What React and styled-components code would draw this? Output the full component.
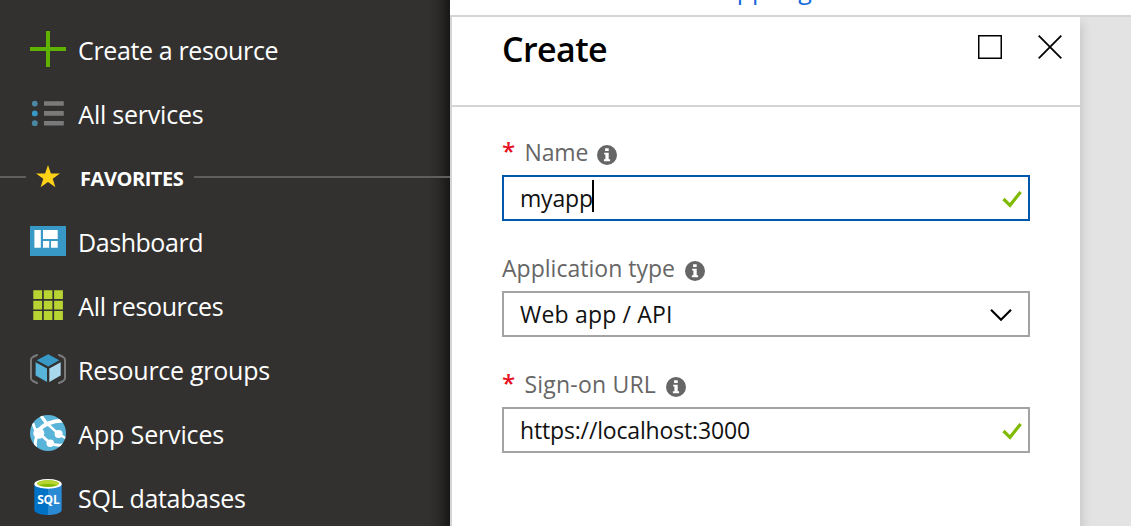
import React from 'react';
import styled, { createGlobalStyle } from 'styled-components';

const GlobalStyle = createGlobalStyle`
  * { box-sizing: border-box; }
  body {
    margin: 0;
    overflow: hidden;
    font-family: 'Open Sans', 'Noto Sans', sans-serif;
  }
`;

const Page = styled.div`
  display: flex;
  width: 1131px;
  height: 526px;
  overflow: hidden;
  background: #e3e3e3;
`;

const Sidebar = styled.nav`
  flex: none;
  width: 450px;
  height: 526px;
  padding-top: 17px;
  overflow: hidden;
  background: linear-gradient(to right, #323130 428px, #2b2a29 438px, #171716 450px);
`;

const NavItem = styled.a`
  display: flex;
  align-items: center;
  height: 64px;
  padding-left: 30px;
  color: #fff;
`;

const NavIcon = styled.svg`
  flex: none;
  width: 36px;
  height: 36px;
`;

const NavLabel = styled.span`
  margin: 1px 0 0 ${(p) => p.$gap}px;
  font-size: 25px;
  line-height: 34px;
  letter-spacing: ${(p) => p.$tracking}px;
  white-space: nowrap;
`;

const SectionHeader = styled.div`
  display: flex;
  align-items: center;
  height: 64px;
  color: #fff;
`;

const Rule = styled.span`
  flex: ${(p) => (p.$width ? 'none' : 1)};
  width: ${(p) => p.$width || 'auto'};
  height: 2px;
  margin-top: -1px;
  background: #5f5e5d;
`;

const SectionIcon = styled(NavIcon)`
  margin-left: 4px;
`;

const SectionLabel = styled.span`
  width: 114px;
  margin-top: 3px;
  margin-left: 14px;
  font-size: 20px;
  font-weight: 700;
  line-height: 28px;
  letter-spacing: -0.45px;
`;

const Content = styled.div`
  flex: 1;
  display: flex;
  flex-direction: column;
  min-width: 0;
`;

const TopBar = styled.header`
  flex: none;
  display: flex;
  align-items: flex-end;
  height: 17px;
  padding: 0 0 9px 271px;
  overflow: hidden;
  background: #fff;
  border-bottom: 2px solid #d5d5d5;
`;

const TopLink = styled.a`
  flex: none;
  color: #1468dc;
  font-size: 25px;
  line-height: 34px;
  white-space: nowrap;
`;

const Blade = styled.section`
  flex: 1;
  width: 630px;
  background: #fff;
  border-left: 2px solid #d5d5d5;
  box-shadow: 2px 6px 10px rgba(0, 0, 0, 0.14);
  clip-path: inset(0 -30px 0 0);
`;

const BladeHeader = styled.div`
  display: flex;
  align-items: flex-start;
  height: 90px;
  padding: 18px 18px 0 50px;
  border-bottom: 2px solid #d5d5d5;
`;

const BladeTitle = styled.h1`
  flex: 1;
  margin: -16px 0 0;
  color: #000;
  font-size: 34px;
  font-weight: 600;
  line-height: 60px;
  letter-spacing: -0.6px;
`;

const WindowButton = styled.button`
  width: 24px;
  height: 24px;
  margin-left: ${(p) => p.$gap || 0}px;
  padding: 0;
  background: none;
  border: 0;

  svg { display: block; }
`;

const Form = styled.form`
  display: flex;
  flex-direction: column;
  gap: 32px;
  padding: 30px 50px 0;
`;

const Field = styled.div`
  display: flex;
  flex-direction: column;
  gap: 8px;
`;

const FieldLabel = styled.label`
  display: flex;
  align-items: center;
  height: 30px;
  color: #666;
  font-size: 23px;
  line-height: 30px;
  letter-spacing: ${(p) => p.$tracking}px;
`;

const Required = styled.span`
  width: 22.5px;
  margin-top: -3px;
  color: #e81123;
  font-size: 24px;
  font-weight: 600;
`;

const InfoIcon = styled.svg`
  width: 20px;
  height: 20px;
  margin: 6px 0 0 ${(p) => p.$gap}px;
`;

const Control = styled.div`
  display: flex;
  align-items: center;
  height: 46px;
  padding: 0 6px 0 16px;
  background: #fff;
  border: 2px solid ${(p) => (p.$focused ? '#0058ad' : '#a3a3a3')};
`;

const Value = styled.span`
  color: #111;
  font-size: 23px;
  line-height: 32px;
  letter-spacing: ${(p) => p.$tracking}px;
  white-space: nowrap;
`;

const Caret = styled.span`
  width: 2px;
  height: 32px;
  margin: 0 0 4px -1px;
  background: #000;
`;

const StatusIcon = styled.svg`
  flex: none;
  width: 20px;
  height: 18px;
  margin: 2px 0 0 auto;
`;

const Chevron = styled.svg`
  flex: none;
  width: 22px;
  height: 14px;
  margin: 2px 10px 0 auto;
`;

const PlusGlyph = () => <path d="M16 0h4v16h16v4H20v16h-4V20H0v-4h16z" fill="#5db300" />;

const ListGlyph = () => (
  <>
    <circle cx="4.8" cy="8.6" r="2.9" fill="#4b88a3" />
    <circle cx="4.8" cy="18.4" r="2.9" fill="#3999c6" />
    <circle cx="4.8" cy="28.2" r="2.9" fill="#4b88a3" />
    <path d="M14 6.2h19.8v4.6H14zM14 16.1h19.8v4.6H14zM14 26h19.8v4.6H14z" fill="#7a7a7a" />
  </>
);

const DashboardGlyph = () => (
  <>
    <path d="M0 3h36v30H0z" fill="#3999c6" />
    <path d="M4.4 7h6.4v17.7H4.4zM13 7h14.7v9H13zM13 18h6.2v6.7H13zM21 18h6.7v6.7H21z" fill="#fff" />
  </>
);

const GridGlyph = () => (
  <path
    d="M3.3 3.3h8.8v8.8H3.300zM13.800 3.300h8.600v8.800h-8.600zM24.100 3.300h8.800v8.800h-8.800zM3.300 13.800h8.800v8.600H3.300zM13.800 13.800h8.600v8.600h-8.600zM24.100 13.800h8.800v8.600h-8.800zM3.300 24.100h8.800v8.800H3.300zM13.800 24.100h8.600v8.800h-8.600zM24.100 24.100h8.800v8.800h-8.800z"
    fill="#b8d432"
  />
);

const CubeGlyph = () => (
  <>
    <path
      d="M7 4 2.8 6Q1 7 1 9V27Q1 29 2.8 30L7 32M29 4l4.2 2Q35 7 35 9V27q0 2-1.8 3L29 32"
      fill="none"
      stroke="#7a7a7a"
      strokeWidth="2"
      strokeLinecap="round"
    />
    <path d="M6.7 9.2 18.2 3.3 29.300 9.200 18.200 15.500z" fill="#3999c6" />
    <path d="M5.600 11.200 17 17.600V31L5.600 24.500z" fill="#59b4d9" />
    <path d="M30.700 11.200 19.300 17.600V31L30.700 24.500z" fill="#a9d8ec" />
  </>
);

const GlobeGlyph = () => (
  <>
    <clipPath id="globe">
      <circle cx="18" cy="18" r="18" />
    </clipPath>
    <g clipPath="url(#globe)">
      <path d="M0 0h36v36H0z" fill="#59b4d9" />
      <g fill="none" stroke="#fff">
        <path d="M8 16Q16 6 33 5.500" strokeWidth="3.800" />
        <path d="M10.500 0 17 9" strokeWidth="3.200" />
        <path d="M17 8.500 28.500 19 37 24" strokeWidth="2.400" />
        <path d="M9 18 20.300 28.300Q25 31 33 30" strokeWidth="2.800" />
        <path d="M8 19Q4.500 25 5.500 33" strokeWidth="3" />
        <path d="M3 8Q4 14 8 18" strokeWidth="2.600" />
      </g>
      <circle cx="8.800" cy="18.300" r="5.500" fill="#fff" />
      <circle cx="28.600" cy="19" r="4" fill="#fff" />
      <circle cx="20.300" cy="28.200" r="3.800" fill="#fff" />
    </g>
  </>
);

const SqlText = styled.text`
  font: 700 12px 'Open Sans', sans-serif;
  letter-spacing: -0.2px;
  fill: #fff;
  text-anchor: middle;
`;

const DatabaseGlyph = () => (
  <>
    <path d="M4.300 5V31c0 2.700 6 5 13.700 5V5z" fill="#0072c6" />
    <path d="M18 5v31c7.700 0 13.700-2.300 13.700-5V5z" fill="#2a8ad4" />
    <ellipse cx="18" cy="4.900" rx="13.700" ry="4.900" fill="#fff" />
    <ellipse cx="18" cy="4.600" rx="11" ry="3.300" fill="#7fba00" />
    <path d="M7 4.600C7 2.700 12 1.300 18 1.300s11 1.400 11 3.300c0 .8-.8 1.400-2 1.900-2-.9-5.300-1.400-9-1.400s-7 .5-9 1.400C7.800 6 7 5.400 7 4.600z" fill="#b8d432" />
    <SqlText x="18.300" y="25.300">SQL</SqlText>
  </>
);

const actions = [
  { label: 'Create a resource', Glyph: PlusGlyph, gap: 12, tracking: -0.37 },
  { label: 'All services', Glyph: ListGlyph, gap: 12.3, tracking: -0.22 },
];

const favorites = [
  { label: 'Dashboard', Glyph: DashboardGlyph, gap: 12, tracking: -0.44 },
  { label: 'All resources', Glyph: GridGlyph, gap: 12.3, tracking: -0.35 },
  { label: 'Resource groups', Glyph: CubeGlyph, gap: 12, tracking: -0.27 },
  { label: 'App Services', Glyph: GlobeGlyph, gap: 12.3, tracking: -0.15 },
  { label: 'SQL databases', Glyph: DatabaseGlyph, gap: 12, tracking: -0.32 },
];

function NavList({ items }) {
  return items.map(({ label, Glyph, gap, tracking }) => (
    <NavItem key={label}>
      <NavIcon viewBox="0 0 36 36"><Glyph /></NavIcon>
      <NavLabel $gap={gap} $tracking={tracking}>{label}</NavLabel>
    </NavItem>
  ));
}

function Info({ gap }) {
  return (
    <InfoIcon viewBox="0 0 20 20" $gap={gap}>
      <circle cx="10" cy="10" r="10" fill="#666" />
      <path d="M8.1 3.300h3.600v2.600H8.100zM7.200 7.700h4.500v6.600h1.400v2H6.900v-2h1.500V9.600H7.200z" fill="#fff" />
    </InfoIcon>
  );
}

function Valid() {
  return (
    <StatusIcon viewBox="0 0 20 18">
      <path d="M1.500 9 8 15.300 18.600 2" fill="none" stroke="#7fba00" strokeWidth="3.200" />
    </StatusIcon>
  );
}

export default function App() {
  return (
    <>
      <GlobalStyle />
      <Page>
        <Sidebar>
          <NavList items={actions} />
          <SectionHeader>
            <Rule $width="26px" />
            <SectionIcon viewBox="0 0 36 36">
              <path d="M18 6l2.900 8.500H30l-7.300 5.300 2.700 8.500L18 23.100l-7.400 5.200 2.700-8.500L6 14.500h9.100z" fill="#fcd116" />
            </SectionIcon>
            <SectionLabel>FAVORITES</SectionLabel>
            <Rule />
          </SectionHeader>
          <NavList items={favorites} />
        </Sidebar>
        <Content>
          <TopBar>
            <TopLink>App registrations</TopLink>
          </TopBar>
          <Blade>
            <BladeHeader>
              <BladeTitle>Create</BladeTitle>
              <WindowButton aria-label="Maximize">
                <svg width="24" height="24">
                  <path d="M.75.75h22.500v22.500H.75z" fill="none" stroke="#000" strokeWidth="1.500" />
                </svg>
              </WindowButton>
              <WindowButton aria-label="Close" $gap={36}>
                <svg width="24" height="24">
                  <path d="M.7.7l22.600 22.600M23.300.7.7 23.300" stroke="#000" strokeWidth="1.800" />
                </svg>
              </WindowButton>
            </BladeHeader>
            <Form>
              <Field>
                <FieldLabel $tracking={-0.13}>
                  <Required>*</Required>Name<Info gap={9} />
                </FieldLabel>
                <Control $focused>
                  <Value $tracking={-0.17}>myapp</Value>
                  <Caret />
                  <Valid />
                </Control>
              </Field>
              <Field>
                <FieldLabel $tracking={0.02}>Application type<Info gap={9.5} /></FieldLabel>
                <Control>
                  <Value $tracking={0.18}>Web app / API</Value>
                  <Chevron viewBox="0 0 22 14">
                    <path d="M1 1.800 11 11.800 21 1.800" fill="none" stroke="#000" strokeWidth="2.200" />
                  </Chevron>
                </Control>
              </Field>
              <Field>
                <FieldLabel $tracking={0.2}>
                  <Required>*</Required>Sign-on URL<Info gap={9.5} />
                </FieldLabel>
                <Control>
                  <Value $tracking={-0.16}>https://localhost:3000</Value>
                  <Valid />
                </Control>
              </Field>
            </Form>
          </Blade>
        </Content>
      </Page>
    </>
  );
}
